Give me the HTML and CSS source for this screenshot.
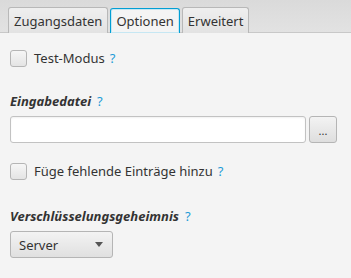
FILE: index.html
```html
<!DOCTYPE html>
<html>
<head>
<meta charset="utf-8">
<link rel="stylesheet" href="styles.css">
</head>
<body>
<div class="pane">
  <div class="header">
    <div class="tab">Zugangsdaten</div>
    <div class="tab selected">Optionen</div>
    <div class="tab">Erweitert</div>
  </div>
  <div class="content">
    <div class="check-row row1">
      <span class="box"></span>
      <span class="label">Test-Modus</span>
      <span class="help">?</span>
    </div>
    <div class="title row2">Eingabedatei<span class="help">?</span></div>
    <div class="file-row">
      <div class="field"></div>
      <div class="btn">...</div>
    </div>
    <div class="check-row row3">
      <span class="box"></span>
      <span class="label">Füge fehlende Einträge hinzu</span>
      <span class="help">?</span>
    </div>
    <div class="title row4">Verschlüsselungsgeheimnis<span class="help">?</span></div>
    <div class="combo">
      <span>Server</span>
      <span class="arrow"></span>
    </div>
  </div>
</div>
</body>
</html>
```
FILE: styles.css
```css
html, body {
  margin: 0;
  padding: 0;
}
body {
  width: 351px;
  height: 278px;
  background: #f4f4f4;
  font-family: "Noto Sans", "Open Sans", sans-serif;
  font-size: 13px;
  color: #333;
  overflow: hidden;
}
.header {
  height: 33px;
  box-sizing: border-box;
  background: linear-gradient(#dadada, #e2e2e2);
  border-bottom: 1px solid #c8c8c8;
  display: flex;
  align-items: flex-end;
  padding-left: 8px;
  gap: 2px;
}
.tab {
  height: 26px;
  box-sizing: border-box;
  padding: 0 5px;
  border: 1px solid #b8b8b8;
  border-bottom: none;
  border-radius: 3px 3px 0 0;
  background: linear-gradient(#efefef, #e2e2e2);
  display: flex;
  align-items: center;
  color: #333;
  margin-bottom: -1px;
}
.tab.selected {
  background: #f4f4f4;
  border: 1px solid #039ed3;
  border-bottom: none;
  box-shadow: inset 0 0 0 1px #c6e7f3;
  height: 25px;
}
.content {
  padding: 0 10px;
}
.check-row {
  display: flex;
  align-items: center;
  height: 18px;
}
.row1 { margin-top: 16px; }
.box {
  width: 17px;
  height: 17px;
  box-sizing: border-box;
  border: 1px solid #b5b5b5;
  border-radius: 3px;
  background: linear-gradient(#f6f6f6, #e4e4e4);
  margin-right: 7px;
}
.help {
  color: #1e9bd7;
  margin-left: 5px;
  font-style: normal;
  font-weight: normal;
}
.title .help {
  margin-left: 6px;
}
.title {
  font-weight: bold;
  font-style: italic;
  height: 18px;
  line-height: 18px;
}
.row2 { margin-top: 25px; }
.file-row {
  display: flex;
  margin-top: 6px;
  gap: 3px;
  height: 27px;
}
.field {
  width: 296px;
  box-sizing: border-box;
  border: 1px solid #c2c2c2;
  border-radius: 3px;
  background: #fff;
  box-shadow: inset 0 1px 2px rgba(0,0,0,0.06);
}
.btn {
  width: 28px;
  box-sizing: border-box;
  border: 1px solid #b5b5b5;
  border-radius: 3px;
  background: linear-gradient(#f3f3f3, #dedede);
  display: flex;
  align-items: center;
  justify-content: center;
  font-size: 11px;
  padding-top: 2px;
}
.row3 { margin-top: 19px; }
.row4 { margin-top: 27px; }
.combo {
  margin-top: 6px;
  width: 103px;
  height: 27px;
  box-sizing: border-box;
  border: 1px solid #b5b5b5;
  border-radius: 3px;
  background: linear-gradient(#f3f3f3, #e0e0e0);
  display: flex;
  align-items: center;
  justify-content: space-between;
  padding: 0 9px 0 8px;
}
.arrow {
  width: 0;
  height: 0;
  border-left: 4px solid transparent;
  border-right: 4px solid transparent;
  border-top: 5px solid #555;
}
```
